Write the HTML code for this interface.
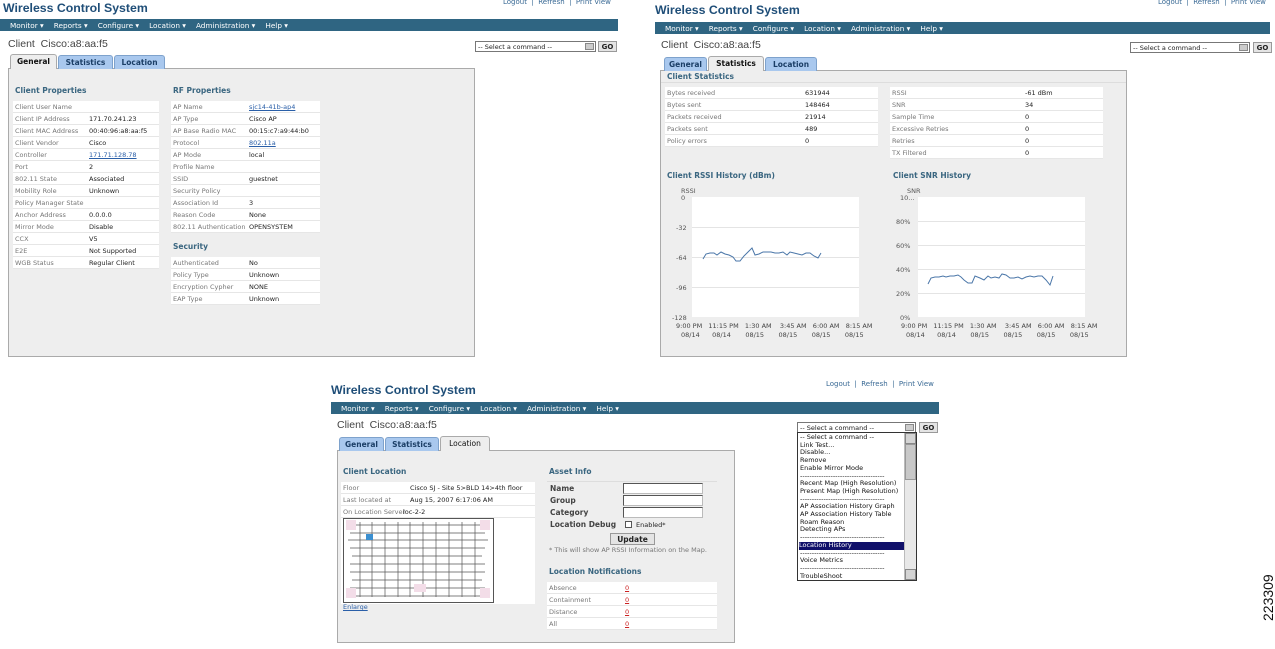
<!DOCTYPE html>
<html><head><meta charset="utf-8"><style>
*{margin:0;padding:0;box-sizing:border-box}
body{width:1275px;height:649px;background:#fff;position:relative;overflow:hidden;font-family:"DejaVu Sans","Liberation Sans",sans-serif;font-size:6.5px;color:#222}
div,span{position:absolute;white-space:nowrap}
.ttl{font-family:"Liberation Sans",sans-serif;font-weight:bold;font-size:12.3px;color:#1f4e78}
.lk{font-size:7px;color:#3a6a95}
.nav{background:#2f6582;color:#fff;font-size:7.3px;padding:2px 0 0 10px;height:12px}
.nav b{font-weight:normal;margin-right:10px;position:static}
.cl{font-family:"Liberation Sans",sans-serif;font-size:10.5px;color:#444}
.sel{border:1px solid #777;background:#fff;height:11px;font-size:6.5px;padding:1px 2px}
.sel i{position:absolute;right:1px;top:1px;width:9px;height:7px;background:#ccc;border:1px solid #888}
.go{border:1px solid #999;background:#e4e4e4;font-weight:bold;font-size:7px;height:11px;width:19px;text-align:center;padding-top:1px}
.box{background:#eeeeee;border:1px solid #aaa}
.tab{height:14px;background:#a9c8ee;border:1px solid #7ea2cc;border-bottom:none;border-radius:3px 3px 0 0;font-weight:bold;font-size:7.5px;color:#1b3e66;text-align:center;padding-top:2px}
.tab.on{background:#eeeeee;border-color:#aaa;color:#111;height:15px}
.h{font-weight:bold;font-size:7.5px;color:#3a6680}
.r{background:#fff;border-bottom:1px solid #e6e6e6;height:12px}
.lb{color:#777}
.u{color:#2a5fa8;text-decoration:underline}
.red{color:#c22;text-decoration:underline}
.in{background:#fff;border:1px solid #555;border-right-color:#bbb;border-bottom-color:#bbb;width:80px;height:11px}
</style></head><body>

<!-- PANEL 1 -->
<div class="ttl" style="left:3px;top:1px">Wireless Control System</div>
<div class="lk" style="left:503px;top:-2px">Logout &nbsp;|&nbsp; Refresh &nbsp;|&nbsp; Print View</div>
<div class="nav" style="left:0;top:19px;width:618px"><b>Monitor ▾</b><b>Reports ▾</b><b>Configure ▾</b><b>Location ▾</b><b>Administration ▾</b><b>Help ▾</b></div>
<div class="cl" style="left:8px;top:38px">Client &nbsp;Cisco:a8:aa:f5</div>
<div class="sel" style="left:475px;top:41px;width:121px">-- Select a command --<i></i></div>
<div class="go" style="left:598px;top:41px">GO</div>
<div class="box" style="left:8px;top:68px;width:467px;height:289px"></div>
<div class="tab on" style="left:10px;top:54px;width:47px">General</div>
<div class="tab" style="left:58px;top:55px;width:55px">Statistics</div>
<div class="tab" style="left:114px;top:55px;width:51px">Location</div>
<div class="h" style="left:15px;top:86px">Client Properties</div>
<div class="h" style="left:173px;top:86px">RF Properties</div>
<div style="left:13px;top:101px;width:146px;height:170px">
<div class="r" style="left:0;top:0;width:146px"><span class="lb" style="left:2px;top:2px">Client User Name</span></div>
<div class="r" style="left:0;top:12px;width:146px"><span class="lb" style="left:2px;top:2px">Client IP Address</span><span style="left:76px;top:2px">171.70.241.23</span></div>
<div class="r" style="left:0;top:24px;width:146px"><span class="lb" style="left:2px;top:2px">Client MAC Address</span><span style="left:76px;top:2px">00:40:96:a8:aa:f5</span></div>
<div class="r" style="left:0;top:36px;width:146px"><span class="lb" style="left:2px;top:2px">Client Vendor</span><span style="left:76px;top:2px">Cisco</span></div>
<div class="r" style="left:0;top:48px;width:146px"><span class="lb" style="left:2px;top:2px">Controller</span><span class="u" style="left:76px;top:2px">171.71.128.78</span></div>
<div class="r" style="left:0;top:60px;width:146px"><span class="lb" style="left:2px;top:2px">Port</span><span style="left:76px;top:2px">2</span></div>
<div class="r" style="left:0;top:72px;width:146px"><span class="lb" style="left:2px;top:2px">802.11 State</span><span style="left:76px;top:2px">Associated</span></div>
<div class="r" style="left:0;top:84px;width:146px"><span class="lb" style="left:2px;top:2px">Mobility Role</span><span style="left:76px;top:2px">Unknown</span></div>
<div class="r" style="left:0;top:96px;width:146px"><span class="lb" style="left:2px;top:2px">Policy Manager State</span></div>
<div class="r" style="left:0;top:108px;width:146px"><span class="lb" style="left:2px;top:2px">Anchor Address</span><span style="left:76px;top:2px">0.0.0.0</span></div>
<div class="r" style="left:0;top:120px;width:146px"><span class="lb" style="left:2px;top:2px">Mirror Mode</span><span style="left:76px;top:2px">Disable</span></div>
<div class="r" style="left:0;top:132px;width:146px"><span class="lb" style="left:2px;top:2px">CCX</span><span style="left:76px;top:2px">V5</span></div>
<div class="r" style="left:0;top:144px;width:146px"><span class="lb" style="left:2px;top:2px">E2E</span><span style="left:76px;top:2px">Not Supported</span></div>
<div class="r" style="left:0;top:156px;width:146px"><span class="lb" style="left:2px;top:2px">WGB Status</span><span style="left:76px;top:2px">Regular Client</span></div>
</div>
<div style="left:171px;top:101px;width:149px;height:140px">
<div class="r" style="left:0;top:0;width:149px"><span class="lb" style="left:2px;top:2px">AP Name</span><span class="u" style="left:78px;top:2px">sjc14-41b-ap4</span></div>
<div class="r" style="left:0;top:12px;width:149px"><span class="lb" style="left:2px;top:2px">AP Type</span><span style="left:78px;top:2px">Cisco AP</span></div>
<div class="r" style="left:0;top:24px;width:149px"><span class="lb" style="left:2px;top:2px">AP Base Radio MAC</span><span style="left:78px;top:2px">00:15:c7:a9:44:b0</span></div>
<div class="r" style="left:0;top:36px;width:149px"><span class="lb" style="left:2px;top:2px">Protocol</span><span class="u" style="left:78px;top:2px">802.11a</span></div>
<div class="r" style="left:0;top:48px;width:149px"><span class="lb" style="left:2px;top:2px">AP Mode</span><span style="left:78px;top:2px">local</span></div>
<div class="r" style="left:0;top:60px;width:149px"><span class="lb" style="left:2px;top:2px">Profile Name</span></div>
<div class="r" style="left:0;top:72px;width:149px"><span class="lb" style="left:2px;top:2px">SSID</span><span style="left:78px;top:2px">guestnet</span></div>
<div class="r" style="left:0;top:84px;width:149px"><span class="lb" style="left:2px;top:2px">Security Policy</span></div>
<div class="r" style="left:0;top:96px;width:149px"><span class="lb" style="left:2px;top:2px">Association Id</span><span style="left:78px;top:2px">3</span></div>
<div class="r" style="left:0;top:108px;width:149px"><span class="lb" style="left:2px;top:2px">Reason Code</span><span style="left:78px;top:2px">None</span></div>
<div class="r" style="left:0;top:120px;width:149px"><span class="lb" style="left:2px;top:2px">802.11 Authentication</span><span style="left:78px;top:2px">OPENSYSTEM</span></div>
</div>
<div class="h" style="left:173px;top:242px">Security</div>
<div style="left:171px;top:257px;width:149px;height:50px">
<div class="r" style="left:0;top:0;width:149px"><span class="lb" style="left:2px;top:2px">Authenticated</span><span style="left:78px;top:2px">No</span></div>
<div class="r" style="left:0;top:12px;width:149px"><span class="lb" style="left:2px;top:2px">Policy Type</span><span style="left:78px;top:2px">Unknown</span></div>
<div class="r" style="left:0;top:24px;width:149px"><span class="lb" style="left:2px;top:2px">Encryption Cypher</span><span style="left:78px;top:2px">NONE</span></div>
<div class="r" style="left:0;top:36px;width:149px"><span class="lb" style="left:2px;top:2px">EAP Type</span><span style="left:78px;top:2px">Unknown</span></div>
</div>

<!-- PANEL 2 -->
<div class="ttl" style="left:655px;top:3px">Wireless Control System</div>
<div class="lk" style="left:1158px;top:-2px">Logout &nbsp;|&nbsp; Refresh &nbsp;|&nbsp; Print View</div>
<div class="nav" style="left:655px;top:22px;width:615px"><b>Monitor ▾</b><b>Reports ▾</b><b>Configure ▾</b><b>Location ▾</b><b>Administration ▾</b><b>Help ▾</b></div>
<div class="cl" style="left:661px;top:39px">Client &nbsp;Cisco:a8:aa:f5</div>
<div class="sel" style="left:1130px;top:42px;width:120px">-- Select a command --<i></i></div>
<div class="go" style="left:1253px;top:42px">GO</div>
<div class="box" style="left:660px;top:70px;width:467px;height:287px"></div>
<div class="tab" style="left:664px;top:57px;width:43px">General</div>
<div class="tab on" style="left:708px;top:56px;width:56px">Statistics</div>
<div class="tab" style="left:765px;top:57px;width:52px">Location</div>
<div class="h" style="left:667px;top:72px">Client Statistics</div>
<div style="left:661px;top:82px;width:465px;border-top:1px solid #ddd;height:1px"></div>
<div style="left:665px;top:87px;width:213px;height:62px">
<div class="r" style="left:0;top:0;width:213px"><span class="lb" style="left:2px;top:2px">Bytes received</span><span style="left:140px;top:2px">631944</span></div>
<div class="r" style="left:0;top:12px;width:213px"><span class="lb" style="left:2px;top:2px">Bytes sent</span><span style="left:140px;top:2px">148464</span></div>
<div class="r" style="left:0;top:24px;width:213px"><span class="lb" style="left:2px;top:2px">Packets received</span><span style="left:140px;top:2px">21914</span></div>
<div class="r" style="left:0;top:36px;width:213px"><span class="lb" style="left:2px;top:2px">Packets sent</span><span style="left:140px;top:2px">489</span></div>
<div class="r" style="left:0;top:48px;width:213px"><span class="lb" style="left:2px;top:2px">Policy errors</span><span style="left:140px;top:2px">0</span></div>
</div>
<div style="left:890px;top:87px;width:213px;height:74px">
<div class="r" style="left:0;top:0;width:213px"><span class="lb" style="left:2px;top:2px">RSSI</span><span style="left:135px;top:2px">-61 dBm</span></div>
<div class="r" style="left:0;top:12px;width:213px"><span class="lb" style="left:2px;top:2px">SNR</span><span style="left:135px;top:2px">34</span></div>
<div class="r" style="left:0;top:24px;width:213px"><span class="lb" style="left:2px;top:2px">Sample Time</span><span style="left:135px;top:2px">0</span></div>
<div class="r" style="left:0;top:36px;width:213px"><span class="lb" style="left:2px;top:2px">Excessive Retries</span><span style="left:135px;top:2px">0</span></div>
<div class="r" style="left:0;top:48px;width:213px"><span class="lb" style="left:2px;top:2px">Retries</span><span style="left:135px;top:2px">0</span></div>
<div class="r" style="left:0;top:60px;width:213px"><span class="lb" style="left:2px;top:2px">TX Filtered</span><span style="left:135px;top:2px">0</span></div>
</div>
<div class="h" style="left:667px;top:171px">Client RSSI History (dBm)</div>
<div class="h" style="left:893px;top:171px">Client SNR History</div>
<div style="left:681px;top:187px;color:#555">RSSI</div>
<div style="left:681px;top:194px;color:#555">0</div>
<div style="left:676px;top:224px;color:#555">-32</div>
<div style="left:676px;top:254px;color:#555">-64</div>
<div style="left:676px;top:284px;color:#555">-96</div>
<div style="left:672px;top:314px;color:#555">-128</div>
<div style="left:907px;top:187px;color:#555">SNR</div>
<div style="left:900px;top:194px;color:#555">10...</div>
<div style="left:896px;top:218px;color:#555">80%</div>
<div style="left:896px;top:242px;color:#555">60%</div>
<div style="left:896px;top:266px;color:#555">40%</div>
<div style="left:896px;top:290px;color:#555">20%</div>
<div style="left:900px;top:314px;color:#555">0%</div>
<div style="left:676px;top:322px;color:#444;white-space:pre">9:00 PM   11:15 PM   1:30 AM    3:45 AM   6:00 AM   8:15 AM</div>
<div style="left:681px;top:331px;color:#444;white-space:pre">08/14      08/14       08/15       08/15       08/15       08/15</div>
<div style="left:901px;top:322px;color:#444;white-space:pre">9:00 PM   11:15 PM   1:30 AM    3:45 AM   6:00 AM   8:15 AM</div>
<div style="left:906px;top:331px;color:#444;white-space:pre">08/14      08/14       08/15       08/15       08/15       08/15</div>

<!-- PANEL 3 -->
<div class="ttl" style="left:331px;top:383px">Wireless Control System</div>
<div class="lk" style="left:826px;top:380px">Logout &nbsp;|&nbsp; Refresh &nbsp;|&nbsp; Print View</div>
<div class="nav" style="left:331px;top:402px;width:608px"><b>Monitor ▾</b><b>Reports ▾</b><b>Configure ▾</b><b>Location ▾</b><b>Administration ▾</b><b>Help ▾</b></div>
<div class="cl" style="left:337px;top:419px">Client &nbsp;Cisco:a8:aa:f5</div>
<div class="sel" style="left:797px;top:422px;width:119px">-- Select a command --<i></i></div>
<div class="go" style="left:919px;top:422px">GO</div>
<div class="box" style="left:337px;top:450px;width:398px;height:193px"></div>
<div class="tab" style="left:339px;top:437px;width:45px">General</div>
<div class="tab" style="left:385px;top:437px;width:54px">Statistics</div>
<div class="tab on" style="left:440px;top:436px;width:50px;font-weight:normal">Location</div>
<div class="h" style="left:343px;top:467px">Client Location</div>
<div class="h" style="left:549px;top:467px">Asset Info</div>
<div style="left:341px;top:482px;width:194px;height:122px;background:#fff">
<div class="r" style="left:0;top:0;width:194px"><span class="lb" style="left:2px;top:2px">Floor</span><span style="left:69px;top:2px">Cisco SJ - Site 5&gt;BLD 14&gt;4th floor</span></div>
<div class="r" style="left:0;top:12px;width:194px"><span class="lb" style="left:2px;top:2px">Last located at</span><span style="left:69px;top:2px">Aug 15, 2007 6:17:06 AM</span></div>
<div class="r" style="left:0;top:24px;width:194px"><span class="lb" style="left:2px;top:2px">On Location Server</span><span style="left:62px;top:2px">loc-2-2</span></div>
</div>
<div class="u" style="left:343px;top:603px">Enlarge</div>
<div style="left:547px;top:481px;width:170px;border-top:1px solid #ddd"></div>
<div class="h" style="left:550px;top:484px;color:#444">Name</div>
<div class="h" style="left:550px;top:496px;color:#444">Group</div>
<div class="h" style="left:550px;top:508px;color:#444">Category</div>
<div class="h" style="left:550px;top:520px;color:#444">Location Debug</div>
<div class="in" style="left:623px;top:483px"></div>
<div class="in" style="left:623px;top:495px"></div>
<div class="in" style="left:623px;top:507px"></div>
<div style="left:625px;top:521px;width:7px;height:7px;border:1px solid #555;background:#fff"></div>
<div style="left:636px;top:521px">Enabled*</div>
<div class="go" style="left:610px;top:533px;width:45px;height:12px;font-size:7.5px">Update</div>
<div class="lb" style="left:549px;top:546px">* This will show AP RSSI Information on the Map.</div>
<div class="h" style="left:549px;top:567px">Location Notifications</div>
<div style="left:547px;top:582px;width:170px;height:48px">
<div class="r" style="left:0;top:0;width:170px"><span class="lb" style="left:2px;top:2px">Absence</span><span class="red" style="left:78px;top:2px">0</span></div>
<div class="r" style="left:0;top:12px;width:170px"><span class="lb" style="left:2px;top:2px">Containment</span><span class="red" style="left:78px;top:2px">0</span></div>
<div class="r" style="left:0;top:24px;width:170px"><span class="lb" style="left:2px;top:2px">Distance</span><span class="red" style="left:78px;top:2px">0</span></div>
<div class="r" style="left:0;top:36px;width:170px"><span class="lb" style="left:2px;top:2px">All</span><span class="red" style="left:78px;top:2px">0</span></div>
</div>
<div style="left:797px;top:432px;width:120px;height:149px;background:#fff;border:1px solid #333;font-size:6.5px;line-height:7.7px;color:#111;padding:1px 0 0 2px;white-space:pre">-- Select a command --
Link Test...
Disable...
Remove
Enable Mirror Mode
------------------------------------
Recent Map (High Resolution)
Present Map (High Resolution)
------------------------------------
AP Association History Graph
AP Association History Table
Roam Reason
Detecting APs
------------------------------------
<span style="position:static;display:block;background:#10106a;color:#fff;width:105px;margin-left:-1px">Location History</span>------------------------------------
Voice Metrics
------------------------------------
TroubleShoot</div>
<div style="left:904px;top:433px;width:12px;height:147px;background:#e8e8e8;border-left:1px solid #bbb"></div>
<div style="left:905px;top:433px;width:11px;height:11px;background:#d4d4d4;border:1px solid #888"></div>
<div style="left:905px;top:444px;width:11px;height:36px;background:#c8c8c8;border:1px solid #999"></div>
<div style="left:905px;top:569px;width:11px;height:11px;background:#d4d4d4;border:1px solid #888"></div>

<svg style="position:absolute;left:0;top:0" width="1275" height="649">
<rect x="692" y="197" width="167" height="120" fill="#fff"/>
<g stroke="#e4e4e4" stroke-width="1"><line x1="692" y1="227.5" x2="859" y2="227.5"/><line x1="692" y1="257.5" x2="859" y2="257.5"/><line x1="692" y1="287.5" x2="859" y2="287.5"/></g>
<polyline fill="none" stroke="#4a76a8" stroke-width="1" points="703,259 706,254 710,253 714,253 717,255 721,252 725,254 729,255 733,257 736,261 740,261 744,256 747,253 752,248 755,255 759,254 763,252 767,252 771,252 775,253 779,253 783,252 787,255 790,252 794,253 798,254 802,255 806,253 810,253 814,256 818,258 821,253"/>
<rect x="918" y="197" width="167" height="120" fill="#fff"/>
<g stroke="#e4e4e4" stroke-width="1"><line x1="918" y1="221.5" x2="1085" y2="221.5"/><line x1="918" y1="245.5" x2="1085" y2="245.5"/><line x1="918" y1="269.5" x2="1085" y2="269.5"/><line x1="918" y1="293.5" x2="1085" y2="293.5"/></g>
<polyline fill="none" stroke="#4a76a8" stroke-width="1" points="928,284 931,278 935,277 939,277 943,276 946,277 950,276 954,276 958,275 961,277 964,280 968,283 972,283 975,276 980,278 984,280 988,276 991,278 995,277 999,278 1002,274 1006,275 1010,278 1014,278 1018,277 1022,279 1026,277 1030,276 1034,277 1038,276 1042,276 1046,280 1050,285 1053,276"/>
<rect x="343.5" y="518.5" width="150" height="84" fill="#fff" stroke="#555"/>
<g stroke="#555" stroke-width="0.7" fill="none">
<path d="M350 525h135M350 533h135M348 540h140M350 548h135M352 556h130M350 564h135M350 572h135M352 580h130M350 588h135M352 596h130"/>
<path d="M360 522v75M372 522v75M385 522v75M398 522v75M410 522v75M423 522v75M436 522v75M449 522v75M462 522v75M475 522v75"/>
</g>
<g fill="#f3dde8"><rect x="346" y="520" width="10" height="10"/><rect x="480" y="520" width="10" height="10"/><rect x="346" y="588" width="10" height="10"/><rect x="480" y="588" width="10" height="10"/><rect x="414" y="584" width="12" height="8"/></g>
<rect x="366" y="534" width="7" height="6" fill="#3b8fd0"/>
</svg>

<div style="left:1261px;top:621px;font-family:'Liberation Sans',sans-serif;font-size:14px;line-height:14px;transform-origin:0 0;transform:rotate(-90deg);color:#111">223309</div>
</body></html>
